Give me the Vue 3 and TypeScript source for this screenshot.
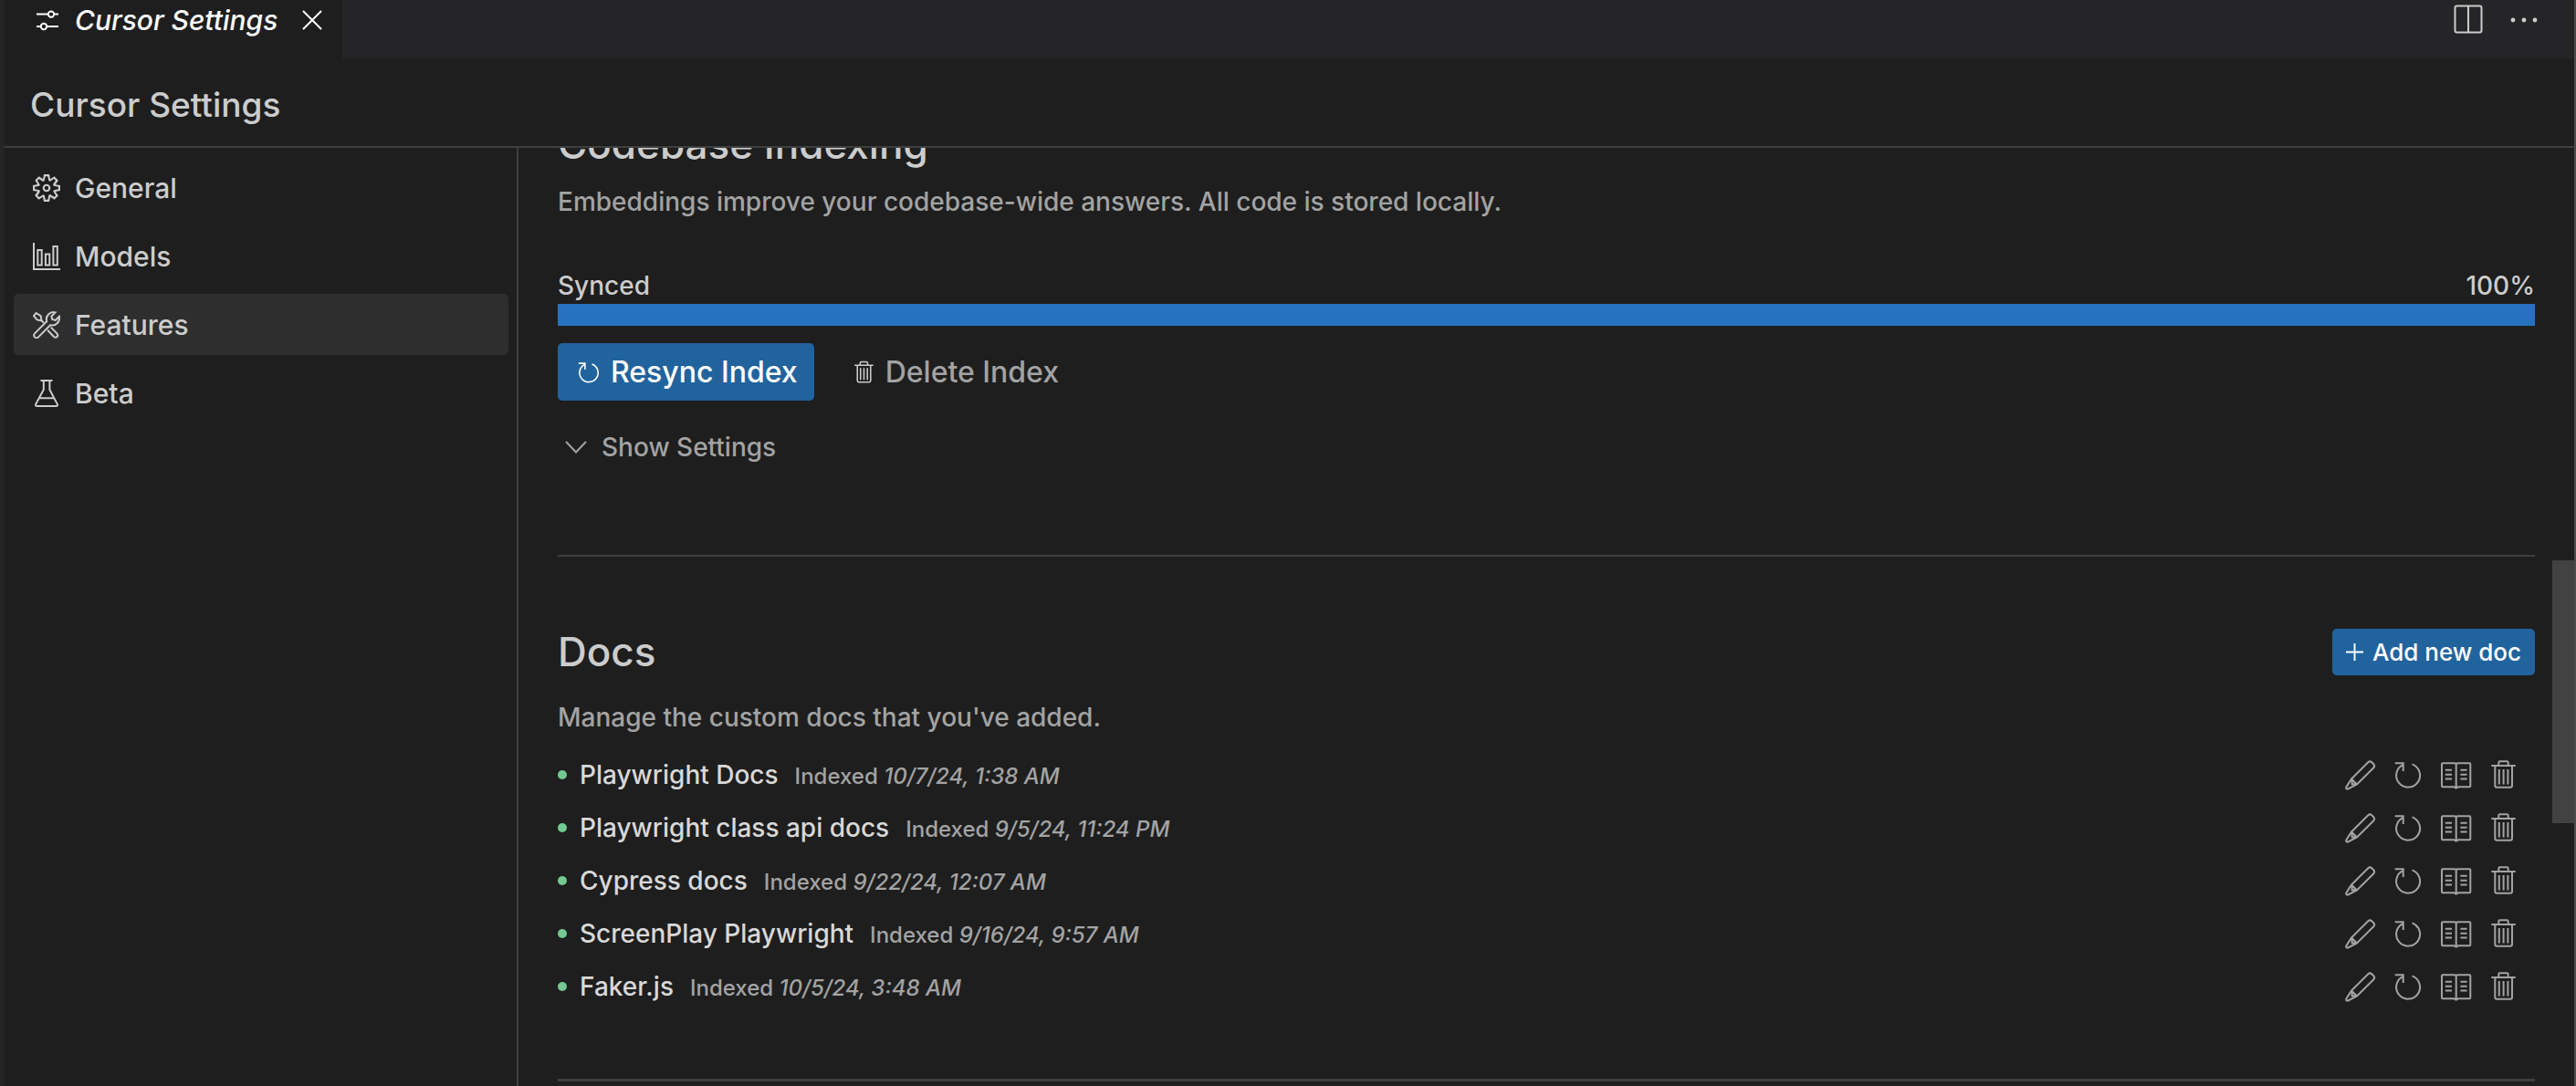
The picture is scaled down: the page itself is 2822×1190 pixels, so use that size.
<script setup lang="ts">
import { ref } from 'vue'

interface NavItem {
  id: string
  label: string
}

interface DocEntry {
  name: string
  indexedAt: string
}

const navItems: NavItem[] = [
  { id: 'general', label: 'General' },
  { id: 'models', label: 'Models' },
  { id: 'features', label: 'Features' },
  { id: 'beta', label: 'Beta' },
]

const active = ref('features')
const progress = ref(100)

const docs: DocEntry[] = [
  { name: 'Playwright Docs', indexedAt: '10/7/24, 1:38 AM' },
  { name: 'Playwright class api docs', indexedAt: '9/5/24, 11:24 PM' },
  { name: 'Cypress docs', indexedAt: '9/22/24, 12:07 AM' },
  { name: 'ScreenPlay Playwright', indexedAt: '9/16/24, 9:57 AM' },
  { name: 'Faker.js', indexedAt: '10/5/24, 3:48 AM' },
]
</script>

<template>
  <div class="window">
    <svg class="symbols" aria-hidden="true">
      <symbol id="i-refresh" viewBox="0 0 36 36">
        <path d="M22.5 6.4A13 13 0 1 1 12.7 6.8M3.7 5.3H12.7V14" />
      </symbol>
      <symbol id="i-trash" viewBox="0 0 36 36">
        <path d="M5.3 8H31.7M13.3 8V4.5Q13.3 3.2 14.6 3.2H22.4Q23.7 3.2 23.7 4.5V8M9.3 8V29.7Q9.3 31.7 11.3 31.7H26Q28 31.7 28 29.7V8M13.8 12V28.6M18.6 12V28.6M23.4 12V28.6" />
      </symbol>
      <symbol id="i-pencil" viewBox="0 0 36 36">
        <path d="M8 22.5L26.3 4.2Q28.3 2.5 30.2 4.2L32.3 6.3Q34 8.3 32.3 10.2L14 28.5L4.2 33.5Q1.8 34 2.2 31.6ZM8 22.5L14 28.5M8.6 23.2V28.2H13.6" />
      </symbol>
      <symbol id="i-book" viewBox="0 0 36 36">
        <path d="M18.7 6.2Q18 5.2 16.5 5.2H4Q3 5.2 3 6.2V30.3Q3 31.3 4 31.3H16.5L18.7 32.6L20.9 31.3H33.3Q34.3 31.3 34.3 30.3V6.2Q34.3 5.2 33.3 5.2H20.9Q19.4 5.2 18.7 6.2V32.6M6.8 12.8H14M6.8 17.7H14M6.8 22.4H14M23.4 12.8H30.6M23.4 17.7H30.6M23.4 22.4H30.6" />
      </symbol>
    </svg>

    <div class="tabbar">
      <div class="tab">
        <svg class="tab-icon" viewBox="0 0 24 24" aria-hidden="true">
          <path d="M0 5.6H12.5M19.5 5.6H24M0 19H4.5M11.5 19H24" />
          <circle cx="16" cy="5.6" r="3.2" />
          <circle cx="8" cy="19" r="3.2" />
        </svg>
        <span class="tab-title">Cursor Settings</span>
        <button class="icon-btn close" type="button" aria-label="Close">
          <svg viewBox="0 0 22 22"><path d="M1 1L21 21M21 1L1 21" /></svg>
        </button>
      </div>
      <div class="tab-actions">
        <button class="icon-btn" type="button" aria-label="Split editor">
          <svg viewBox="0 0 32 32"><rect x="1.5" y="1.5" width="29" height="29" rx="2" /><path d="M16 1.5V30.5" /></svg>
        </button>
        <button class="icon-btn" type="button" aria-label="More actions">
          <svg class="dots" viewBox="0 0 32 32">
            <circle cx="5" cy="17" r="2.4" /><circle cx="17" cy="17" r="2.4" /><circle cx="29" cy="17" r="2.4" />
          </svg>
        </button>
      </div>
    </div>

    <header class="header">
      <h1>Cursor Settings</h1>
    </header>

    <div class="body">
      <nav class="sidebar">
        <button
          v-for="item in navItems"
          :key="item.id"
          type="button"
          class="nav-item"
          :class="{ active: item.id === active }"
          @click="active = item.id"
        >
          <svg v-if="item.id === 'general'" class="solid" viewBox="1 1 14 14">
            <path d="M9.1 4.4L8.6 2H7.4l-.5 2.4-.7.3-2-1.3-.9.8 1.3 2-.2.7-2.4.5v1.2l2.4.5.3.8-1.3 2 .8.8 2-1.3.8.3.4 2.3h1.2l.5-2.4.8-.3 2 1.3.8-.8-1.3-2 .3-.8 2.3-.4V7.4l-2.4-.5-.3-.8 1.3-2-.8-.8-2 1.3-.7-.2zM9.4 1l.5 2.4L12 2.1l2 2-1.4 2.1 2.4.4v2.8l-2.4.5L14 12l-2 2-2.1-1.4-.5 2.4H6.6l-.5-2.4L4 13.9l-2-2 1.4-2.1L1 9.4V6.6l2.4-.5L2.1 4l2-2 2.1 1.4.4-2.4h2.8zm.6 7c0 1.1-.9 2-2 2s-2-.9-2-2 .9-2 2-2 2 .9 2 2zM8 9c.6 0 1-.4 1-1s-.4-1-1-1-1 .4-1 1 .4 1 1 1z" />
          </svg>
          <svg v-else-if="item.id === 'models'" viewBox="0 0 30 30">
            <path d="M1 0V29H30M5.3 8H9.7V24.6H5.3ZM13.9 12.5H18.3V24.6H13.9ZM22.4 4H26.8V24.6H22.4Z" />
          </svg>
          <svg v-else-if="item.id === 'features'" viewBox="0 0 30 30">
            <path d="M24.6 1.4A7.8 7.8 0 0 0 15.2 11.2L2 24.4A2.8 2.8 0 0 0 6 28.4L19.2 15.2A7.8 7.8 0 0 0 28.8 5.8L24.8 9.9L21.2 9L20.4 5.5Z" />
            <path d="M1 5.2L3.6 2L8.6 5.2L9.6 10.4L4.6 9.4ZM9.3 10L12 12.8M16.2 20.8L23 28Q25 29.6 26.6 28Q28 26.2 26.4 24.4L19.8 17.6" />
          </svg>
          <svg v-else viewBox="0 0 30 30">
            <path d="M8.5 1H21.5M11.8 1V11L3.2 26.8Q2.4 29 4.6 29H25.4Q27.6 29 26.8 26.8L18.4 11V1M6.8 20.3H23.4" />
          </svg>
          <span>{{ item.label }}</span>
        </button>
      </nav>

      <main class="content">
        <section class="indexing">
          <h2>Codebase Indexing</h2>
          <p class="desc">Embeddings improve your codebase-wide answers. All code is stored locally.</p>
          <div class="status">
            <span>Synced</span>
            <span>{{ progress }}%</span>
          </div>
          <div class="track" role="progressbar" aria-label="Indexing progress" :aria-valuenow="progress">
            <div class="fill" :style="{ width: progress + '%' }"></div>
          </div>
          <div class="actions">
            <button class="btn primary" type="button">
              <svg viewBox="0 0 36 36"><use href="#i-refresh" /></svg>
              <span>Resync Index</span>
            </button>
            <button class="btn ghost" type="button">
              <svg viewBox="0 0 36 36"><use href="#i-trash" /></svg>
              <span>Delete Index</span>
            </button>
          </div>
          <button class="disclosure" type="button">
            <svg viewBox="0 0 24 24"><path d="M1 6L12 17.5L23 6" /></svg>
            <span>Show Settings</span>
          </button>
        </section>

        <section class="docs">
          <div class="docs-head">
            <h2>Docs</h2>
            <button class="btn add" type="button">
              <svg viewBox="0 0 20 20"><path d="M10 0V20M0 10H20" /></svg>
              <span>Add new doc</span>
            </button>
          </div>
          <p class="desc">Manage the custom docs that you've added.</p>
          <ul class="doc-list">
            <li v-for="doc in docs" :key="doc.name" class="doc">
              <span class="dot"></span>
              <span class="doc-name">{{ doc.name }}</span>
              <span class="doc-meta">Indexed <em>{{ doc.indexedAt }}</em></span>
              <span class="doc-actions">
                <button class="icon-btn" type="button" aria-label="Edit"><svg viewBox="0 0 36 36"><use href="#i-pencil" /></svg></button>
                <button class="icon-btn" type="button" aria-label="Reindex"><svg viewBox="0 0 36 36"><use href="#i-refresh" /></svg></button>
                <button class="icon-btn" type="button" aria-label="View"><svg viewBox="0 0 36 36"><use href="#i-book" /></svg></button>
                <button class="icon-btn" type="button" aria-label="Delete"><svg viewBox="0 0 36 36"><use href="#i-trash" /></svg></button>
              </span>
            </li>
          </ul>
        </section>

        <div class="scroll-thumb"></div>
      </main>
    </div>
  </div>
</template>

<style>
body {
  background: #1e1e1e;
}
</style>

<style scoped>
.window {
  box-sizing: border-box;
  display: flex;
  flex-direction: column;
  height: 100vh;
  overflow: hidden;
  border-left: 5px solid #252528;
  border-right: 2px solid #4b4b4b;
  background: #1e1e1e;
  color: #cccccc;
  font-family: Inter, "Liberation Sans", sans-serif;
  font-size: 28px;
  font-weight: 500;
}

.symbols {
  position: absolute;
  width: 0;
  height: 0;
}

svg {
  display: block;
  flex: none;
  fill: none;
  stroke: currentColor;
  stroke-width: 2;
}

button {
  margin: 0;
  padding: 0;
  border: 0;
  background: none;
  color: inherit;
  font: inherit;
  cursor: pointer;
}

h1,
h2,
p,
ul {
  margin: 0;
  padding: 0;
  font-weight: inherit;
}

h1,
h2 {
  font-weight: 450;
}

.tabbar {
  display: flex;
  flex: none;
  justify-content: space-between;
  height: 64px;
  background: #252527;
}

.tab {
  display: flex;
  align-items: center;
  box-sizing: border-box;
  width: 370px;
  padding: 0 22px 20px 35px;
  background: #1e1e1e;
  color: #ffffff;
}

.tab-icon {
  width: 24px;
  height: 24px;
  margin-right: 18px;
}

.tab-title {
  font-size: 30px;
  font-style: italic;
  white-space: nowrap;
}

.close {
  margin-left: auto;
}

.close svg {
  width: 22px;
  height: 22px;
}

.tab-actions {
  display: flex;
  align-items: center;
  gap: 28px;
  padding: 0 40px 22px 0;
}

.tab-actions svg {
  width: 32px;
  height: 32px;
}

.tab-actions .dots {
  fill: currentColor;
  stroke: none;
}

.header {
  flex: none;
  padding: 28px 28px 22px;
  border-bottom: 2px solid #3f3f3f;
}

h1 {
  font-size: 37px;
  line-height: 46px;
}

.body {
  display: flex;
  flex: 1;
  min-height: 0;
}

.sidebar {
  display: flex;
  flex: none;
  flex-direction: column;
  gap: 8px;
  box-sizing: border-box;
  width: 563px;
  padding: 10px 9px 0 10px;
  border-right: 2px solid #3f3f3f;
}

.nav-item {
  display: flex;
  align-items: center;
  gap: 16px;
  height: 67px;
  padding: 0 21px;
  border-radius: 5px;
  font-size: 30px;
}

.nav-item svg {
  width: 30px;
  height: 30px;
}

.nav-item .solid {
  fill: currentColor;
  stroke: none;
}

.active {
  background: #2e2e2e;
}

.content {
  position: relative;
  flex: 1;
  min-width: 0;
  padding: 0 43px;
  overflow: hidden;
}

h2 {
  font-size: 44px;
  line-height: 56px;
}

.desc {
  color: #a3a3a3;
  line-height: 40px;
}

.indexing {
  margin-top: -32px;
  padding-bottom: 98px;
  border-bottom: 2px solid #3f3f3f;
}

.indexing .desc {
  margin-top: 15px;
}

.status {
  display: flex;
  justify-content: space-between;
  margin-top: 54px;
  line-height: 36px;
}

.track {
  height: 24px;
  margin-top: 2px;
}

.fill {
  height: 100%;
  background: #2771c1;
}

.actions {
  display: flex;
  gap: 20px;
  margin-top: 19px;
}

.btn {
  display: flex;
  align-items: center;
  gap: 10px;
  padding: 0 18px 0 20px;
  border-radius: 5px;
  font-size: 32px;
  line-height: 63px;
  white-space: nowrap;
}

.btn svg {
  width: 28px;
  height: 28px;
}

.primary,
.add {
  background: #21639d;
  color: #ffffff;
}

.ghost {
  color: #a3a3a3;
}

.ghost svg {
  color: #cccccc;
}

.disclosure {
  display: flex;
  align-items: center;
  gap: 16px;
  margin-top: 31px;
  padding-left: 8px;
  color: #a3a3a3;
  line-height: 40px;
}

.disclosure svg {
  width: 24px;
  height: 24px;
}

.docs {
  padding: 76px 0 72px;
  border-bottom: 3px solid #3f3f3f;
}

.docs-head {
  display: flex;
  align-items: center;
  justify-content: space-between;
}

.add {
  padding: 0 15px;
  font-size: 26px;
  line-height: 51px;
}

.add svg {
  width: 19px;
  height: 19px;
}

.docs .desc {
  margin-top: 24px;
}

.doc-list {
  margin-top: 14px;
  list-style: none;
}

.doc {
  display: flex;
  align-items: baseline;
  height: 58px;
  line-height: 58px;
}

.dot {
  align-self: center;
  width: 10px;
  height: 10px;
  margin-right: 14px;
  border-radius: 50%;
  background: #73c991;
}

.doc-name {
  margin-right: 18px;
  color: #d8d8d8;
}

.doc-meta {
  color: #a3a3a3;
  font-size: 24px;
  line-height: 32px;
}

.doc-actions {
  display: flex;
  align-self: center;
  gap: 16px;
  margin-left: auto;
  padding-right: 17px;
  color: #a3a3a3;
}

.doc-actions svg {
  width: 36px;
  height: 36px;
}

.scroll-thumb {
  position: absolute;
  top: 452px;
  right: 0;
  width: 24px;
  height: 288px;
  background: #424242;
}
</style>
